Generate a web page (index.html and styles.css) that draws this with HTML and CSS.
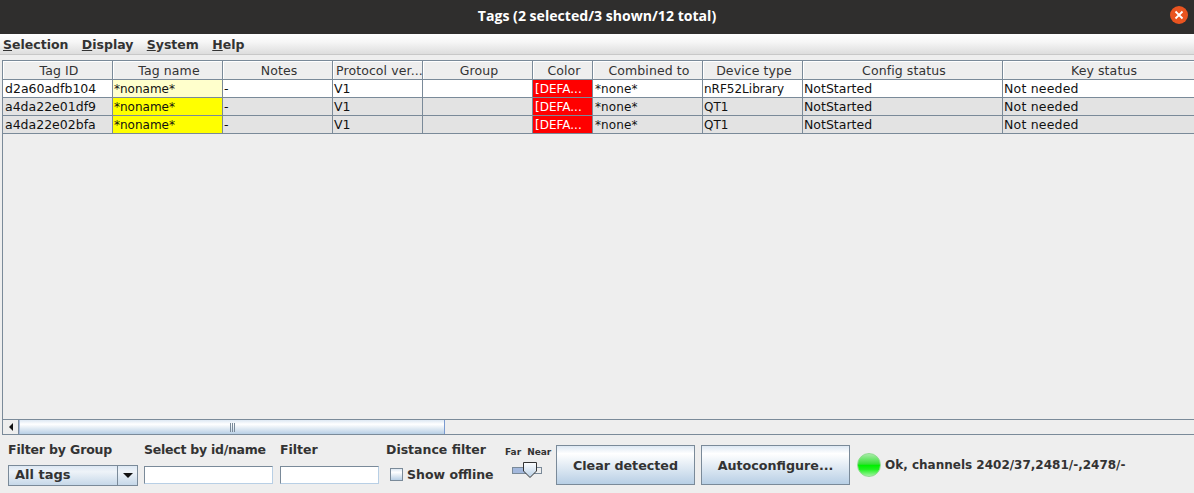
FILE: index.html
```html
<!DOCTYPE html>
<html lang="en">

<head>
    <meta charset="UTF-8">
    <meta name="viewport" content="width=device-width, initial-scale=1.0">
    <title>Tags</title>
    <link rel="stylesheet" href="styles.css">
</head>

<body>

    <header class="title-bar">
        <h1>Tags (2 selected/3 shown/12 total)</h1>
        <button class="close-btn" aria-label="Close">
            <svg width="16" height="16" viewBox="0 0 16 16">
                <path d="M4.5 4.5 L11.5 11.5 M11.5 4.5 L4.5 11.5" stroke="#fff" stroke-width="1.8" fill="none" />
            </svg>
        </button>
    </header>

    <nav class="menu-bar">
        <span class="menu-item"><u>S</u>election</span>
        <span class="menu-item"><u>D</u>isplay</span>
        <span class="menu-item"><u>S</u>ystem</span>
        <span class="menu-item"><u>H</u>elp</span>
    </nav>

    <main class="table-pane">
        <div class="table-view">
            <table class="tags">
                <colgroup>
                    <col class="w110"><col class="w110"><col class="w110"><col class="w90"><col class="w110">
                    <col class="w60"><col class="w110"><col class="w100"><col class="w200"><col class="w200">
                </colgroup>
                <thead>
                    <tr>
                        <th>Tag ID</th><th>Tag name</th><th>Notes</th><th class="th-clip">Protocol ver...</th><th>Group</th>
                        <th>Color</th><th>Combined to</th><th>Device type</th><th>Config status</th><th>Key status</th>
                    </tr>
                </thead>
                <tbody>
                    <tr>
                        <td class="tag-id">d2a60adfb104</td><td class="name-new">*noname*</td><td>-</td><td>V1</td><td></td>
                        <td class="color-cell">[DEFA...</td><td class="none-cell">*none*</td><td class="plain">nRF52Library</td><td>NotStarted</td><td class="key-cell">Not needed</td>
                    </tr>
                    <tr class="selected">
                        <td class="tag-id">a4da22e01df9</td><td class="name-sel">*noname*</td><td>-</td><td>V1</td><td></td>
                        <td class="color-cell">[DEFA...</td><td class="none-cell">*none*</td><td class="plain">QT1</td><td>NotStarted</td><td class="key-cell">Not needed</td>
                    </tr>
                    <tr class="selected">
                        <td class="tag-id">a4da22e02bfa</td><td class="name-sel">*noname*</td><td>-</td><td>V1</td><td></td>
                        <td class="color-cell">[DEFA...</td><td class="none-cell">*none*</td><td class="plain">QT1</td><td>NotStarted</td><td class="key-cell">Not needed</td>
                    </tr>
                </tbody>
            </table>
        </div>
        <div class="h-scroll">
            <div class="arrow-left"><span class="tri-left"></span></div>
            <div class="thumb"><span class="grip"></span></div>
        </div>
    </main>

    <footer class="controls">
        <div class="field field-group">
            <label>Filter by Group</label>
            <div class="combo">
                <span class="combo-text">All tags</span>
                <span class="combo-btn"><span class="tri-down"></span></span>
            </div>
        </div>
        <div class="field field-select">
            <label>Select by id/name</label>
            <input type="text" class="text-input">
        </div>
        <div class="field field-filter">
            <label>Filter</label>
            <input type="text" class="text-input">
        </div>
        <div class="field field-distance">
            <label>Distance filter</label>
            <div class="check-row"><span class="check"></span>Show offline</div>
        </div>
        <div class="slider-box">
            <div class="slider-labels"><span>Far</span><span>Near</span></div>
            <svg class="slider" width="32" height="20" viewBox="0 0 32 20">
                <defs>
                    <linearGradient id="knob" x1="0" y1="0" x2="0" y2="1">
                        <stop offset="0" stop-color="#ffffff" />
                        <stop offset="1" stop-color="#b8cfe5" />
                    </linearGradient>
                </defs>
                <rect x="0.5" y="6.5" width="29" height="6" fill="#eeeeee" stroke="#7a8a99" />
                <rect x="1" y="7" width="12" height="5" fill="#a3b8dc" />
                <path d="M11.5 1.5 H24.5 V10 L18 16.5 L11.5 10 Z" fill="url(#knob)" stroke="#333" />
            </svg>
        </div>
        <button class="btn btn-clear">Clear detected</button>
        <button class="btn btn-auto">Autoconfigure...</button>
        <div class="status">
            <span class="led"></span>
            <span class="status-text">Ok, channels 2402/37,2481/-,2478/-</span>
        </div>
    </footer>

</body>

</html>
```

FILE: styles.css
```css
* {
    margin: 0;
    padding: 0;
    box-sizing: border-box;
}

body {
    width: 1194px;
    height: 493px;
    overflow: hidden;
    background-color: #eeeeee;
    color: #333333;
    font-family: "DejaVu Sans", sans-serif;
    font-size: 12px;
}

.title-bar {
    height: 34px;
    background-color: #2f2e2d;
    display: flex;
    align-items: center;
    justify-content: center;
    position: relative;
}

.title-bar h1 {
    color: #ffffff;
    font-family: "Open Sans", sans-serif;
    font-size: 14.1px;
    font-weight: 700;
    margin-top: -3px;
}

.close-btn {
    position: absolute;
    top: 6px;
    right: 6px;
    width: 18px;
    height: 18px;
    border: none;
    border-radius: 50%;
    background-color: #e95420;
    display: flex;
    align-items: center;
    justify-content: center;
}

.menu-bar {
    height: 21px;
    display: flex;
    align-items: center;
    gap: 13.4px;
    padding: 0 0 0 3px;
    font-weight: 700;
    font-size: 12.5px;
    background: linear-gradient(#ffffff, #f6f6f6 40%, #dddddd);
    border-bottom: 1px solid #c8c8c8;
}

.table-pane {
    margin: 5px 0 0 2px;
    height: 375px;
    display: flex;
    flex-direction: column;
    border-left: 1px solid #7a8a99;
    border-top: 1px solid #7a8a99;
    border-bottom: 1px solid #7a8a99;
}

.table-view {
    flex: 1;
    overflow: hidden;
}

.tags {
    width: 1200px;
    table-layout: fixed;
    border-collapse: separate;
    border-spacing: 0;
    font-size: 12.5px;
}

.w60 { width: 60px; }
.w90 { width: 90px; }
.w100 { width: 100px; }
.w110 { width: 110px; }
.w200 { width: 200px; }

.tags th {
    height: 19px;
    padding-left: 3px;
    font-weight: 400;
    letter-spacing: 0.1px;
    text-align: center;
    background-color: #eeeeee;
    border-right: 1px solid #7a8a99;
    border-bottom: 1px solid #7a8a99;
    box-shadow: inset 1px 1px 0 #ffffff;
    white-space: nowrap;
    overflow: hidden;
}

.tags th.th-clip {
    padding-left: 3px;
    text-align: left;
}

.tags td {
    height: 18px;
    padding: 0 1px;
    color: #111111;
    background-color: #ffffff;
    border-right: 1px solid #7a8a99;
    border-bottom: 1px solid #7a8a99;
    white-space: nowrap;
    overflow: hidden;
}

.tags td.tag-id {
    padding-left: 2px;
}

.tags td.plain,
.tags td.name-new,
.tags td.name-sel {
    font-size: 12px;
}

.tags td.none-cell {
    padding-left: 2px;
    font-size: 12px;
    letter-spacing: 0.1px;
}

.tags td.key-cell {
    letter-spacing: 0.2px;
}

.tags tr.selected td {
    background-color: #e3e3e3;
}

.tags td.name-new {
    background-color: #ffffcc;
}

.tags tr.selected td.name-sel {
    background-color: #ffff00;
}

.tags td.color-cell,
.tags tr.selected td.color-cell {
    padding-left: 2px;
    background-color: #ff0000;
    color: #ffffff;
    font-size: 12px;
}

.h-scroll {
    height: 15px;
    display: flex;
    border-top: 1px solid #7a8a99;
}

.arrow-left {
    width: 16px;
    display: flex;
    align-items: center;
    justify-content: center;
    border-right: 1px solid #7a8a99;
}

.tri-left {
    width: 0;
    height: 0;
    border-top: 4px solid transparent;
    border-bottom: 4px solid transparent;
    border-right: 4px solid #111111;
}

.thumb {
    width: 426px;
    display: flex;
    align-items: center;
    justify-content: center;
    background: linear-gradient(#dde8f3, #ffffff 30%, #b8cfe5);
    border-left: 1px solid #a3b8dc;
    border-right: 1px solid #7a9ad0;
}

.grip {
    width: 5px;
    height: 9px;
    background: repeating-linear-gradient(90deg, #7a8a99 0, #7a8a99 1px, transparent 1px, transparent 2px);
}

.controls {
    display: flex;
    height: 58px;
    padding-left: 8px;
    font-weight: 700;
    font-size: 12.5px;
}

.field {
    display: flex;
    flex-direction: column;
    padding-top: 8px;
}

.field label {
    height: 15px;
    margin: -1px 0 8px;
    white-space: nowrap;
    line-height: 15px;
}

.field-group { width: 136px; }
.field-select { width: 136px; }
.field-filter { width: 106px; }
.field-distance { width: 119px; }

.field-group label {
    letter-spacing: -0.15px;
}

.field-select label {
    letter-spacing: -0.25px;
}

.combo {
    width: 130px;
    height: 21px;
    display: flex;
    border: 1px solid #7a8a99;
    background: linear-gradient(#dde8f3, #eef3f8 30%, #c6d8e9);
}

.combo-text {
    flex: 1;
    padding-left: 6px;
    line-height: 18px;
    font-size: 13px;
}

.combo-btn {
    width: 20px;
    border-left: 1px solid #7a8a99;
    display: flex;
    align-items: center;
    justify-content: center;
}

.tri-down {
    width: 0;
    height: 0;
    border-left: 5px solid transparent;
    border-right: 5px solid transparent;
    border-top: 5px solid #111111;
}

.text-input {
    height: 18px;
    margin-top: 1px;
    background-color: #ffffff;
    border: 1px solid #7a8a99;
    border-right-color: #b8cfe5;
    border-bottom-color: #b8cfe5;
    outline: none;
}

.field-select .text-input { width: 129px; }
.field-filter .text-input { width: 99px; }

.check-row {
    display: flex;
    align-items: center;
    gap: 4px;
    padding-left: 4px;
    height: 19px;
    white-space: nowrap;
}

.check {
    width: 13px;
    height: 13px;
    border: 1px solid #7a8a99;
    background: linear-gradient(#dde8f3, #ffffff 30%, #b8cfe5);
}

.slider-box {
    width: 51px;
    padding-top: 11px;
    font-size: 9px;
}

.slider-labels {
    display: flex;
    gap: 6px;
    height: 12px;
    line-height: 12px;
    white-space: nowrap;
}

.slider {
    display: block;
    margin: 3px 0 0 7px;
}

.btn {
    height: 40px;
    margin: 10px 6px 0 0;
    border: 1px solid #7a8a99;
    background: linear-gradient(#dde8f3, #ffffff 20%, #b8cfe5);
    color: #333333;
    font-family: "DejaVu Sans", sans-serif;
    font-size: 12.7px;
    font-weight: 700;
}

.btn-clear { width: 139px; }
.btn-auto { width: 149px; }

.status {
    display: flex;
    align-items: center;
    gap: 4px;
    margin: 9px 0 0 1px;
    height: 42px;
    white-space: nowrap;
    font-size: 12px;
}

.led {
    width: 24px;
    height: 24px;
    border-radius: 50%;
    border: 1px solid #8fdc8f;
    background: linear-gradient(#a8eca8, #35e035 46%, #00f000 52%, #20f020 70%, #a0f4a0);
}
```
